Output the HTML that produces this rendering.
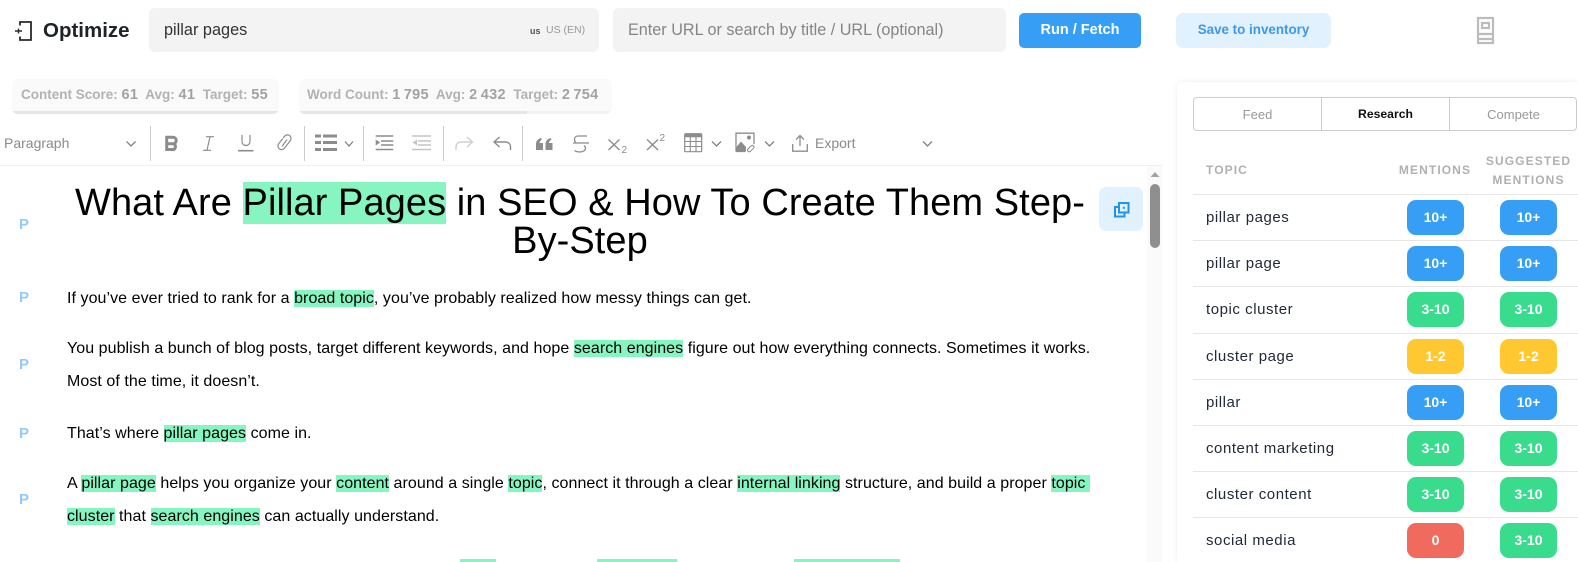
<!DOCTYPE html>
<html lang="en">
<head>
<meta charset="utf-8">
<title>Optimize</title>
<style>
html,body{margin:0;padding:0;background:#fff;}
body{width:1578px;height:562px;overflow:hidden;position:relative;font-family:"Liberation Sans",Arial,sans-serif;}
.a{position:absolute;white-space:nowrap;}
mark{background:#86f5bf;color:inherit;}
.p{position:absolute;left:19px;font-size:15px;font-weight:700;color:#93c9fb;line-height:16px;}
.body{position:absolute;left:67px;font-size:16px;line-height:33px;letter-spacing:.06px;color:#000;white-space:nowrap;}
.topic{position:absolute;left:1206px;font-size:15px;color:#222a38;line-height:18px;letter-spacing:.55px;white-space:nowrap;}
.row{position:absolute;left:1193px;width:385px;height:1px;background:#e6e6e6;}
.b{position:absolute;width:57px;height:35px;border-radius:9px;color:#fff;font-size:14px;font-weight:700;line-height:35px;text-align:center;}
.blue{background:#369ff5;}.green{background:#38dc8c;}.yellow{background:#ffc830;}.red{background:#f06a5d;}
.th{position:absolute;font-size:12px;font-weight:700;letter-spacing:1.1px;color:#b0b0b0;line-height:19px;text-align:center;white-space:nowrap;}
.stat{position:absolute;top:79px;height:35px;background:#fafafa;border-radius:6px;overflow:hidden;font-size:13.5px;font-weight:700;color:#b2b2b2;line-height:31px;white-space:nowrap;}
.stat i{position:absolute;left:0;bottom:0;height:3px;background:#e6e6e6;}
.stat b{color:#a2a2a2;font-size:14.5px;letter-spacing:.3px;}
.tab{position:absolute;top:97px;height:34px;font-size:13px;line-height:35px;text-align:center;color:#999;}
</style>
</head>
<body>

<svg class="a" style="left:14px;top:21px" width="20" height="20" viewBox="0 0 20 20" fill="none" stroke="#2a2a2a" stroke-width="1.800"><path d="M6 4.500V1h11v18H6v-3.500"/><path d="M1 10h7M4.500 7.500v5" stroke-width="1.400"/></svg>
<div class="a" style="left:43px;top:19px;font-size:20.5px;font-weight:700;color:#1f2328;line-height:24px;">Optimize</div>

<div class="a" style="left:149px;top:8px;width:450px;height:44px;background:#f3f3f3;border-radius:6px;"></div>
<div class="a" style="left:164px;top:21px;font-size:16.3px;color:#333;line-height:19px;">pillar pages</div>
<div class="a" style="left:530px;top:25px;font-size:9px;font-weight:700;color:#55504f;line-height:12px;">us</div>
<div class="a" style="left:546px;top:24px;font-size:10.5px;color:#999;line-height:13px;">US (EN)</div>

<div class="a" style="left:613px;top:8px;width:393px;height:44px;background:#f3f3f3;border-radius:6px;"></div>
<div class="a" style="left:628px;top:21px;font-size:16.2px;color:#858585;line-height:19px;">Enter URL or search by title / URL (optional)</div>

<div class="a" style="left:1019px;top:13px;width:122px;height:35px;background:#369ff5;border-radius:5px;color:#fff;font-size:14.5px;font-weight:700;line-height:34px;text-align:center;">Run / Fetch</div>
<div class="a" style="left:1176px;top:13px;width:155px;height:35px;background:#e1f1fe;border-radius:7px;color:#3b99ec;font-size:13.4px;font-weight:700;line-height:33px;text-align:center;">Save to inventory</div>

<svg class="a" style="left:0;top:0" width="1578" height="562" fill="none">
  <g stroke="#bcbcbc" stroke-width="2.200">
    <rect x="1478" y="18" width="15" height="25"/>
    <rect x="1482" y="23" width="7" height="5"/>
    <path d="M1478 34h15M1478 39h15"/>
  </g>
</svg>

<div class="stat" style="left:12px;width:267px;"><span style="position:absolute;left:9px;top:0;">Content Score: <b>61</b>&nbsp; Avg: <b>41</b>&nbsp; Target: <b>55</b></span><i style="width:100%"></i></div>
<div class="stat" style="left:299px;width:313px;"><span style="position:absolute;left:8px;top:0;">Word Count: <b>1&#8201;795</b>&nbsp; Avg: <b>2&#8201;432</b>&nbsp; Target: <b>2&#8201;754</b></span><i style="width:228px"></i><i style="left:228px;width:85px;background:#f2f2f2"></i></div>

<div class="a" style="left:4px;top:135px;font-size:14px;color:#8a8a8a;line-height:17px;">Paragraph</div>
<div class="a" style="left:815px;top:135px;font-size:14px;color:#8a8a8a;line-height:17px;">Export</div>

<svg class="a" style="left:0;top:0" width="1578" height="562" fill="none">
  <!-- separators -->
  <path d="M150.500 126v35M304.500 126v35M363.500 126v35M443.500 126v35M522.500 126v35" stroke="#ccc"/>
  <!-- chevrons -->
  <path d="M126.500 141.500l4.500 4.500 4.500-4.500M345 141.500l4 4.500 4-4.500M712 141.500l4.500 4.500 4.500-4.500M765 141.500l4.500 4.500 4.500-4.500M923 141.500l4.500 4.500 4.500-4.500" stroke="#808080" stroke-width="1.300"/>
  <g stroke="#8c8c8c">
    <!-- bold -->
    <path d="M166.700 137.300h6.300a3.200 3.200 0 0 1 0 6.400h-6.300zM166.700 143.700h7a3.300 3.300 0 0 1 0 5.800h-7z" stroke-width="3"/>
    <!-- italic -->
    <path d="M206 136.700h8M203 150.300h8M210 136.700l-3 13.600" stroke-width="1.200"/>
    <!-- underline -->
    <path d="M242 135v6.500a4 4 0 0 0 8 0V135" stroke-width="1.200"/>
    <path d="M238 150.700h15.500" stroke-width="1.600"/>
    <!-- link -->
    <path d="M283 138l2-2.200a3.600 3.600 0 0 1 5.400 4.700l-6 7.700a3.600 3.600 0 0 1-5.700-4.400l4-5.200M282 146.500l5-7" stroke-width="1.200"/>
    <!-- list -->
    <path d="M323 136h14M323 142.500h14M323 149.500h14M315 136h6M315 142.500h6M315 149.500h6" stroke-width="3"/>
    <!-- indent -->
    <path d="M375.700 136h17.600M381 141h12.300M381 145h12.300M375.700 149.500h17.600" stroke-width="1.400"/>
    <path d="M375.700 139.500l4.500 3-4.500 3z" fill="#8c8c8c" stroke="none"/>
    <!-- undo -->
    <path d="M499.500 137l-5.500 5 5.500 5M494 142h11c3.500 0 5.500 2 5.500 5v3" stroke-width="1.400"/>
    <!-- strike -->
    <path d="M587 136h-9c-2.500 0-3.500 1.800-3.500 3.500 0 1.300.5 2.300 1.500 3.300M573 143h16M584 145.500c1 .8 1.500 1.800 1.500 3 0 2-2.500 3.500-6 3.500-1.800 0-3.500-.5-5-1.500" stroke-width="1.300"/>
    <!-- subscript/superscript X -->
    <path d="M608.500 139.500l11 10.500M619.500 139.500l-11 10.500M647 139.500l11 10.500M658 139.500l-11 10.500" stroke-width="1.400"/>
    <!-- table -->
    <rect x="684.700" y="133.700" width="17" height="18" rx="1" stroke-width="1.200"/>
    <path d="M684.700 135.500h17" stroke-width="3.500"/>
    <path d="M684.700 141.500h17M684.700 146.500h17M690.300 134v18M696 134v18" stroke-width="1.100"/>
    <!-- image -->
    <path d="M736 151.500v-18.300h18v11M736 151.500h9" stroke-width="1.300"/>
    <!-- export -->
    <path d="M800 146v-10.500M796 139.500l4-4 4 4M792.700 144v7.200h14.600V144" stroke-width="1.300"/>
  </g>
  <!-- outdent -->
  <g stroke="#c4c4c4">
    <path d="M412 136h19M418 141h13M418 145h13M412 149.500h19" stroke-width="1.400"/>
    <path d="M417 139.500l-4.500 3 4.500 3z" fill="#c4c4c4" stroke="none"/>
    <!-- redo -->
    <path d="M467 137l5.500 5-5.500 5M472.500 142h-11c-3.500 0-5.500 2-5.500 5v3" stroke="#cfcfcf" stroke-width="1.400"/>
  </g>
  <!-- quote -->
  <path d="M536 150v-6c0-3 2-5 5-6l1 1.500c-1.500 1-2.500 2-2.500 3.500h3.500v7zM545.500 150v-6c0-3 2-5 5-6l1 1.500c-1.500 1-2.500 2-2.500 3.500h3.500v7z" fill="#8c8c8c"/>
  <!-- image fill -->
  <path d="M736 151.500v-4l5-6 5 5.500v4.500z" fill="#8c8c8c"/>
  <circle cx="749" cy="137.500" r="2" fill="#8c8c8c"/>
  <path d="M749 148l2-2a1.700 1.700 0 0 1 2.500 2.300l-3 3a1.700 1.700 0 0 1-2.500-2.300l3-3" stroke="#8c8c8c"/>
  <text x="621.500" y="153" font-family="Liberation Sans" font-size="10" fill="#8a8a8a">2</text>
  <text x="659.500" y="141" font-family="Liberation Sans" font-size="10" fill="#8a8a8a">2</text>
</svg>

<div class="a" style="left:0;top:165px;width:1162px;height:1px;background:#f0f0f0;"></div>

<div class="a" style="left:66px;top:184px;width:1028px;text-align:center;font-size:38px;line-height:38px;letter-spacing:.07px;color:#000;white-space:normal;">What Are <mark>Pillar Pages</mark> in SEO &amp; How To Create Them Step-<br>By-Step</div>

<div class="a" style="left:1099px;top:187px;width:44px;height:44px;background:#e1f1fe;border-radius:7px;"></div>
<svg class="a" style="left:1113px;top:201px" width="17" height="17" fill="none" stroke="#1e93f0" stroke-width="2"><rect x="6" y="2" width="9.500" height="9.500"/><path d="M6 6H2v9.500h9.500v-4"/><rect x="9.800" y="5.800" width="2" height="2" fill="#1e93f0" stroke="none"/></svg>

<div class="a" style="left:1147px;top:166px;width:15px;height:396px;background:#fafafa;"></div>
<div class="a" style="left:1150px;top:184px;width:9.500px;height:64px;background:#8f8f8f;border-radius:5px;"></div>
<svg class="a" style="left:1150px;top:172px" width="10" height="6"><path d="M5 0l4.500 5H.5z" fill="#a3a3a3"/></svg>

<div class="p" style="top:217px;">P</div>
<div class="p" style="top:290px;">P</div>
<div class="p" style="top:357px;">P</div>
<div class="p" style="top:426px;">P</div>
<div class="p" style="top:492px;">P</div>

<div class="body" style="top:282px;">If you’ve ever tried to rank for a <mark>broad topic</mark>, you’ve probably realized how messy things can get.</div>
<div class="body" style="top:332px;">You publish a bunch of blog posts, target different keywords, and hope <mark>search engines</mark> figure out how everything connects. Sometimes it works.<br>Most of the time, it doesn’t.</div>
<div class="body" style="top:417px;">That’s where <mark>pillar pages</mark> come in.</div>
<div class="body" style="top:467px;">A <mark>pillar page</mark> helps you organize your <mark>content</mark> around a single <mark>topic</mark>, connect it through a clear <mark>internal linking</mark> structure, and build a proper <mark>topic&nbsp;</mark><br><mark>cluster</mark> that <mark>search engines</mark> can actually understand.</div>

<div class="a" style="left:460px;top:559px;width:36px;height:3px;background:#86f5bf;"></div>
<div class="a" style="left:597px;top:559px;width:80px;height:3px;background:#86f5bf;"></div>
<div class="a" style="left:794px;top:559px;width:106px;height:3px;background:#86f5bf;"></div>

<div class="a" style="left:1177px;top:82px;width:401px;height:480px;background:#fff;border-radius:6px 0 0 0;box-shadow:0 0 6px rgba(0,0,0,.08);"></div>

<div class="a" style="left:1193px;top:97px;width:384px;height:34px;border:1px solid #ccc;border-radius:4px;box-sizing:border-box;"></div>
<div class="a" style="left:1321px;top:97px;width:1px;height:34px;background:#ccc;"></div>
<div class="a" style="left:1449px;top:97px;width:1px;height:34px;background:#ccc;"></div>
<div class="tab" style="left:1194px;width:127px;">Feed</div>
<div class="tab" style="left:1322px;width:127px;color:#111;font-weight:700;font-size:12.2px;">Research</div>
<div class="tab" style="left:1450px;width:127px;">Compete</div>

<div class="th" style="left:1206px;top:161px;">TOPIC</div>
<div class="th" style="left:1385px;top:161px;width:100px;">MENTIONS</div>
<div class="th" style="left:1478.500px;top:152px;width:100px;">SUGGESTED<br>MENTIONS</div>

<div class="row" style="top:194px"></div>
<div class="row" style="top:240px"></div>
<div class="row" style="top:286px"></div>
<div class="row" style="top:333px"></div>
<div class="row" style="top:379px"></div>
<div class="row" style="top:425px"></div>
<div class="row" style="top:471px"></div>
<div class="row" style="top:517px"></div>

<div class="topic" style="top:209px">pillar pages</div>
<div class="b blue" style="left:1407px;top:200px">10+</div><div class="b blue" style="left:1500px;top:200px">10+</div>
<div class="topic" style="top:255px">pillar page</div>
<div class="b blue" style="left:1407px;top:246px">10+</div><div class="b blue" style="left:1500px;top:246px">10+</div>
<div class="topic" style="top:301px">topic cluster</div>
<div class="b green" style="left:1407px;top:292px">3-10</div><div class="b green" style="left:1500px;top:292px">3-10</div>
<div class="topic" style="top:348px">cluster page</div>
<div class="b yellow" style="left:1407px;top:339px">1-2</div><div class="b yellow" style="left:1500px;top:339px">1-2</div>
<div class="topic" style="top:394px">pillar</div>
<div class="b blue" style="left:1407px;top:385px">10+</div><div class="b blue" style="left:1500px;top:385px">10+</div>
<div class="topic" style="top:440px">content marketing</div>
<div class="b green" style="left:1407px;top:431px">3-10</div><div class="b green" style="left:1500px;top:431px">3-10</div>
<div class="topic" style="top:486px">cluster content</div>
<div class="b green" style="left:1407px;top:477px">3-10</div><div class="b green" style="left:1500px;top:477px">3-10</div>
<div class="topic" style="top:532px">social media</div>
<div class="b red" style="left:1407px;top:523px">0</div><div class="b green" style="left:1500px;top:523px">3-10</div>

</body>
</html>
